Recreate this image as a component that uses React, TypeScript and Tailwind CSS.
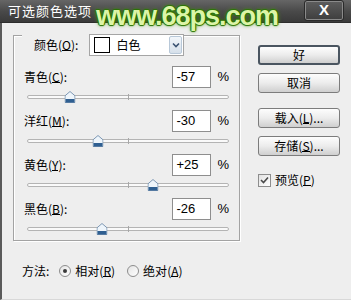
import { ReactNode } from "react";

const FONT = "font-['Noto_Sans_CJK_SC','Liberation_Sans',sans-serif]";

const CHANNELS = [
  { label: "青色", key: "C", value: -57 },
  { label: "洋红", key: "M", value: -30 },
  { label: "黄色", key: "Y", value: 25 },
  { label: "黑色", key: "B", value: -26 },
];

const Hotkey = ({ name, k, dots }: { name: string; k: string; dots?: boolean }) => (
  <span>
    {name}(<u className="no-underline border-b border-current leading-[11px] inline-block">{k}</u>)
    {dots ? "..." : ""}
  </span>
);

const Thumb = () => (
  <svg width="11" height="12" viewBox="0 0 11 12">
    <path d="M5.5 0.5 L10.5 4.8 V11.5 H0.5 V4.8 Z" fill="#eef5fb" stroke="#7d97b3" />
    <rect x="1" y="8" width="9" height="3.5" fill="#2f5f91" />
  </svg>
);

const Slider = ({ value }: { value: number }) => {
  const pct = ((value + 100) / 200) * 100;
  return (
    <div className="relative h-[12px] mt-[3px] ml-[13px] mr-[10px] flex items-center">
      <div className="w-full h-[4px] rounded-full bg-[#fafafa] border border-[#b4b4b4]" />
      <div className="absolute left-1/2 top-[3px] h-[6px] w-px bg-[#a8a8a8]" />
      <div className="absolute top-0 -translate-x-1/2 h-[12px]" style={{ left: `${pct}%` }}>
        <Thumb />
      </div>
    </div>
  );
};

const Button = ({ children, primary }: { children: ReactNode; primary?: boolean }) => (
  <div
    className={`h-[20px] w-[82px] flex items-center justify-center rounded-[3px] text-[12px] text-black bg-gradient-to-b from-[#fdfdfd] via-[#ececec] to-[#cfcfcf] ${
      primary ? "border-2 border-[#4a5560]" : "border border-[#7c7c7c]"
    }`}
  >
    {children}
  </div>
);

const Radio = ({ checked }: { checked?: boolean }) => (
  <div className="w-[12px] h-[12px] rounded-full border border-[#8d8d8d] bg-gradient-to-br from-[#e4e4e4] to-white flex items-center justify-center">
    {checked && <div className="w-[4px] h-[4px] rounded-full bg-[#3a3a3a]" />}
  </div>
);

export default function App() {
  return (
    <div className={`relative w-[351px] h-[300px] overflow-hidden bg-[#eeeeee] flex flex-col ${FONT} text-[12px] text-black`}>
      {/* title bar */}
      <div className="h-[23px] flex items-center justify-between pl-[8px] pr-[7px] bg-gradient-to-b from-[#666666] via-[#4a4a4a] to-[#3a3a3a] border-b border-[#2d2d2d]">
        <span className="text-white text-[13px] tracking-[1px]">可选颜色选项</span>
        <div className="mt-[-1px] w-[40px] h-[21px] rounded-[3px] border border-[#2a2a2a] shadow-[inset_0_0_0_1px_#8a8a8a] bg-gradient-to-b from-[#5e5e5e] to-[#3e3e3e] flex items-center justify-center text-white font-bold text-[15px] font-['Liberation_Sans',sans-serif]">
          X
        </div>
      </div>

      {/* watermark */}
      <div className="absolute left-[96px] top-[3px] text-[27px] leading-none tracking-[-1px] font-bold font-['Liberation_Sans',sans-serif] text-[#dcf5a6] [text-shadow:0_0_1px_#1f5a00,1px_0_1px_#2d7a05,-1px_0_1px_#2d7a05,0_1px_1px_#2d7a05,0_-1px_1px_#2d7a05,0_0_4px_#4fa010]">
        www.68ps.com
      </div>

      {/* body */}
      <div className="flex-1 flex border-l-2 border-[#5a5a5a] border-b border-b-[#d8d8d8] pl-[11px] pt-[12px]">
        <div className="flex flex-col">
          <div className="w-[227px] h-[206px] border border-[#a3a3a3] shadow-[1px_1px_0_#fff,inset_1px_1px_0_#fff] flex flex-col">
            {/* header */}
            <div className="-mt-[2px] h-[22px] flex items-center">
              <span className="ml-[8px] pl-[12px] pr-[11px] bg-[#eeeeee] h-full flex items-center">
                颜色(<u className="no-underline border-b border-current leading-[11px] inline-block">O</u>):
              </span>
              <div className="w-[95px] h-[22px] bg-white border border-[#a5a5a5] flex items-center pl-[4px] pr-[1px]">
                <div className="w-[16px] h-[16px] border border-black bg-white" />
                <span className="ml-[6px] flex-1">白色</span>
                <div className="w-[13px] h-[18px] rounded-[2px] border border-[#b8c8d8] bg-gradient-to-b from-[#f2f6fa] to-[#d6e0ea] flex items-center justify-center">
                  <svg width="8" height="6" viewBox="0 0 8 6">
                    <path d="M1 1.5 L4 4.5 L7 1.5" fill="none" stroke="#3b5372" strokeWidth="1.6" />
                  </svg>
                </div>
              </div>
              <div className="flex-1" />
            </div>

            <div className="mt-[10px] flex flex-col gap-[7px]">
              {CHANNELS.map((c) => (
                <div key={c.key} className="flex flex-col">
                  <div className="h-[22px] flex items-center pl-[10px] pr-[10px]">
                    <span className="flex-1">
                      <Hotkey name={c.label} k={c.key} />:
                    </span>
                    <div className="w-[39px] h-[22px] bg-white border border-[#8e8e8e] flex items-center pl-[3px] text-[13px] font-['Liberation_Sans',sans-serif]">
                      {c.value > 0 ? `+${c.value}` : c.value}
                    </div>
                    <span className="ml-[6px] text-[13px] font-['Liberation_Sans',sans-serif]">%</span>
                  </div>
                  <Slider value={c.value} />
                </div>
              ))}
            </div>
          </div>

          {/* method */}
          <div className="mt-[23px] ml-[9px] h-[14px] flex items-center">
            <span>方法:</span>
            <div className="ml-[10px] flex items-center gap-[4px]">
              <Radio checked />
              <Hotkey name="相对" k="R" />
            </div>
            <div className="ml-[12px] flex items-center gap-[4px]">
              <Radio />
              <Hotkey name="绝对" k="A" />
            </div>
          </div>
        </div>

        {/* right column */}
        <div className="ml-[18px] mt-[10px] flex flex-col">
          <Button primary>好</Button>
          <div className="mt-[8px]">
            <Button>取消</Button>
          </div>
          <div className="mt-[15px]">
            <Button>
              <Hotkey name="载入" k="L" dots />
            </Button>
          </div>
          <div className="mt-[8px]">
            <Button>
              <Hotkey name="存储" k="S" dots />
            </Button>
          </div>
          <div className="mt-[15px] flex items-center gap-[4px]">
            <div className="w-[13px] h-[13px] border border-[#8d8d8d] bg-gradient-to-br from-[#e2e2e2] to-white flex items-center justify-center">
              <svg width="9" height="8" viewBox="0 0 9 8">
                <path d="M1 4 L3.5 6.5 L8 1.5" fill="none" stroke="#4a4a4a" strokeWidth="1.6" />
              </svg>
            </div>
            <Hotkey name="预览" k="P" />
          </div>
        </div>
      </div>
    </div>
  );
}
